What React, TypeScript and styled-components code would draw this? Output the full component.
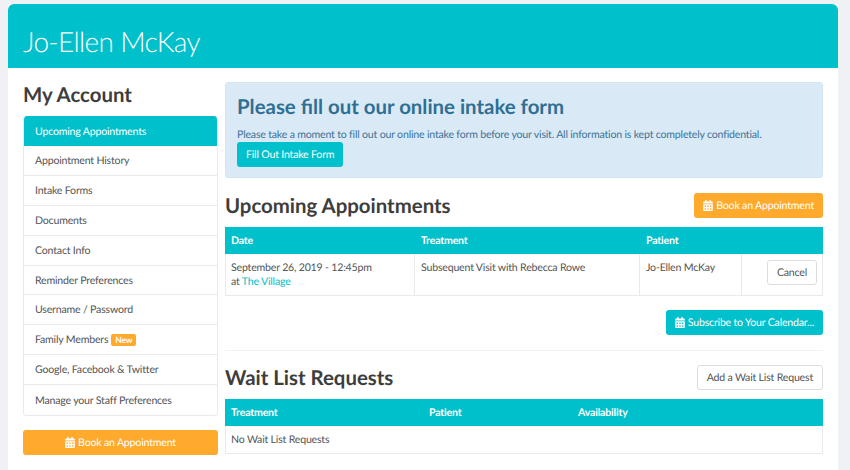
import React from 'react';
import styled, { createGlobalStyle } from 'styled-components';
import { FaCalendarAlt } from 'react-icons/fa';

const teal = '#00c0cb';
const orange = '#ffa92d';
const border = '#e9eaec';

const GlobalStyle = createGlobalStyle`
  html, body {
    margin: 0;
    height: 470px;
    overflow: hidden;
    background: #f0f1f4;
    font-family: Lato, "Open Sans", sans-serif;
    font-size: 10.6px;
    letter-spacing: -0.2px;
    color: #4a4a4a;
    text-rendering: geometricPrecision;
  }
  * { box-sizing: border-box; }
`;

const Page = styled.div`
  width: 830px;
  height: 466px;
  margin: 4px 0 0 8px;
  background: #fff;
  overflow: hidden;
`;

const Banner = styled.header`
  height: 64px;
  padding: 0 15px;
  display: flex;
  align-items: center;
  background: ${teal};
  border-radius: 6px 6px 0 0;
`;

const Name = styled.h1`
  margin: 10px 0 0;
  font-size: 28px;
  font-weight: 300;
  letter-spacing: -0.65px;
  color: #fff;
`;

const Columns = styled.div`
  display: flex;
  padding: 14px 15px 0;
  gap: 7px;
`;

const Sidebar = styled.aside`
  width: 195px;
  flex: none;
`;

const SideTitle = styled.h2`
  margin: 2px 0 10px;
  font-size: 20.4px;
  line-height: 22px;
  font-weight: 700;
  letter-spacing: 0;
  color: #3d3d3d;
`;

const Nav = styled.nav`
  border: 1px solid ${border};
  border-top: 0;
  border-radius: 4px;
  overflow: hidden;
`;

const NavItem = styled.a<{ $active?: boolean }>`
  display: flex;
  align-items: center;
  gap: 3px;
  height: ${p => (p.$active ? '30px' : '29.9px')};
  margin: ${p => (p.$active ? '0 -1px' : '0')};
  padding: 1px 0 0 ${p => (p.$active ? '12px' : '11px')};
  background: ${p => (p.$active ? teal : '#fff')};
  color: ${p => (p.$active ? '#fff' : '#555')};
  border-bottom: ${p => (p.$active ? '0' : `1px solid ${border}`)};
  &:last-child { border-bottom: 0; }
`;

const Badge = styled.span`
  padding: 0 4px;
  height: 12px;
  line-height: 12px;
  border-radius: 2px;
  background: ${orange};
  color: #fff;
  font-size: 8.5px;
  font-weight: 700;
`;

const Button = styled.button<{ $tone: 'orange' | 'teal' | 'plain'; $block?: boolean }>`
  display: ${p => (p.$block ? 'flex' : 'inline-flex')};
  width: ${p => (p.$block ? '100%' : 'auto')};
  align-items: center;
  justify-content: center;
  gap: 3px;
  height: 25px;
  padding: 0 9px;
  border-radius: 3px;
  font: inherit;
  letter-spacing: inherit;
  text-rendering: inherit;
  white-space: nowrap;
  border: ${p => (p.$tone === 'plain' ? '1px solid #dcdde0' : '0')};
  background: ${p => (p.$tone === 'plain' ? '#fff' : p.$tone === 'orange' ? orange : teal)};
  color: ${p => (p.$tone === 'plain' ? '#555' : '#fff')};
`;

const SideAction = styled.div`
  margin-top: 14px;
`;

const Main = styled.main`
  width: 598px;
  flex: none;
`;

const Alert = styled.section`
  height: 96px;
  padding: 12px 11px 0;
  background: #d9eaf6;
  border: 1px solid #d3e5f2;
  border-radius: 3px;
  color: #3d7296;
`;

const AlertTitle = styled.h2`
  margin: 0 0 10px;
  font-size: 20.4px;
  line-height: 24px;
  font-weight: 700;
  letter-spacing: 0;
  color: #2f6f94;
`;

const AlertText = styled.p`
  margin: 0;
  line-height: 13px;
`;

const SectionHead = styled.div<{ $top: number }>`
  display: flex;
  justify-content: space-between;
  align-items: center;
  height: 25px;
  margin-top: ${p => p.$top}px;
  margin-bottom: 9px;
`;

const SectionTitle = styled.h2`
  margin: 0;
  padding-top: 2px;
  font-size: 20.4px;
  line-height: 25px;
  font-weight: 700;
  letter-spacing: 0;
  color: #3d3d3d;
`;

const Table = styled.table`
  width: 598px;
  table-layout: fixed;
  border-collapse: separate;
  border-spacing: 0;
`;

const Th = styled.th`
  height: 27px;
  padding: 0 6px;
  background: ${teal};
  color: #fff;
  text-align: left;
  font-weight: 700;
`;

const Td = styled.td`
  height: 42px;
  padding: 7px 6px 0;
  vertical-align: top;
  line-height: 14px;
  color: #555;
  border-bottom: 1px solid ${border};
  border-right: 1px solid ${border};
  &:first-child {
    padding-left: 5px;
    border-left: 1px solid ${border};
  }
`;

const EmptyTd = styled(Td)`
  height: 28px;
  padding-top: 1px;
  vertical-align: middle;
`;

const CancelTd = styled(Td)`
  padding: 6px 5px 0 0;
  text-align: right;
`;

const Link = styled.a`
  color: ${teal};
`;

const SubscribeRow = styled.div`
  display: flex;
  justify-content: flex-end;
  margin-top: 14px;
  padding-bottom: 15px;
  border-bottom: 1px solid #f1f2f3;
`;

const CalendarIcon = styled(FaCalendarAlt)`
  width: 10px;
  height: 11px;
  flex: none;
`;

const navItems = [
  'Appointment History',
  'Intake Forms',
  'Documents',
  'Contact Info',
  'Reminder Preferences',
  'Username / Password',
  'Family Members',
  'Google, Facebook & Twitter',
  'Manage your Staff Preferences',
];

export default function App() {
  return (
    <>
      <GlobalStyle />
      <Page>
        <Banner>
          <Name>Jo-Ellen McKay</Name>
        </Banner>
        <Columns>
          <Sidebar>
            <SideTitle>My Account</SideTitle>
            <Nav>
              <NavItem $active>Upcoming Appointments</NavItem>
              {navItems.map(item => (
                <NavItem key={item}>
                  {item}
                  {item === 'Family Members' && <Badge>New</Badge>}
                </NavItem>
              ))}
            </Nav>
            <SideAction>
              <Button $tone="orange" $block>
                <CalendarIcon /> Book an Appointment
              </Button>
            </SideAction>
          </Sidebar>
          <Main>
            <Alert>
              <AlertTitle>Please fill out our online intake form</AlertTitle>
              <AlertText>
                Please take a moment to fill out our online intake form before your visit. All information is kept completely confidential.
              </AlertText>
              <Button $tone="teal">Fill Out Intake Form</Button>
            </Alert>
            <SectionHead $top={15}>
              <SectionTitle>Upcoming Appointments</SectionTitle>
              <Button $tone="orange">
                <CalendarIcon /> Book an Appointment
              </Button>
            </SectionHead>
            <Table>
              <colgroup>
                <col width={190} />
                <col width={225} />
                <col width={102} />
                <col width={81} />
              </colgroup>
              <thead>
                <tr>
                  <Th>Date</Th>
                  <Th>Treatment</Th>
                  <Th>Patient</Th>
                  <Th />
                </tr>
              </thead>
              <tbody>
                <tr>
                  <Td>
                    September 26, 2019 - 12:45pm
                    <br />
                    at <Link>The Village</Link>
                  </Td>
                  <Td>Subsequent Visit with Rebecca Rowe</Td>
                  <Td>Jo-Ellen McKay</Td>
                  <CancelTd>
                    <Button $tone="plain">Cancel</Button>
                  </CancelTd>
                </tr>
              </tbody>
            </Table>
            <SubscribeRow>
              <Button $tone="teal">
                <CalendarIcon /> Subscribe to Your Calendar...
              </Button>
            </SubscribeRow>
            <SectionHead $top={14}>
              <SectionTitle>Wait List Requests</SectionTitle>
              <Button $tone="plain">Add a Wait List Request</Button>
            </SectionHead>
            <Table>
              <colgroup>
                <col width={198} />
                <col width={149} />
                <col width={251} />
              </colgroup>
              <thead>
                <tr>
                  <Th>Treatment</Th>
                  <Th>Patient</Th>
                  <Th>Availability</Th>
                </tr>
              </thead>
              <tbody>
                <tr>
                  <EmptyTd colSpan={3}>No Wait List Requests</EmptyTd>
                </tr>
              </tbody>
            </Table>
          </Main>
        </Columns>
      </Page>
    </>
  );
}
